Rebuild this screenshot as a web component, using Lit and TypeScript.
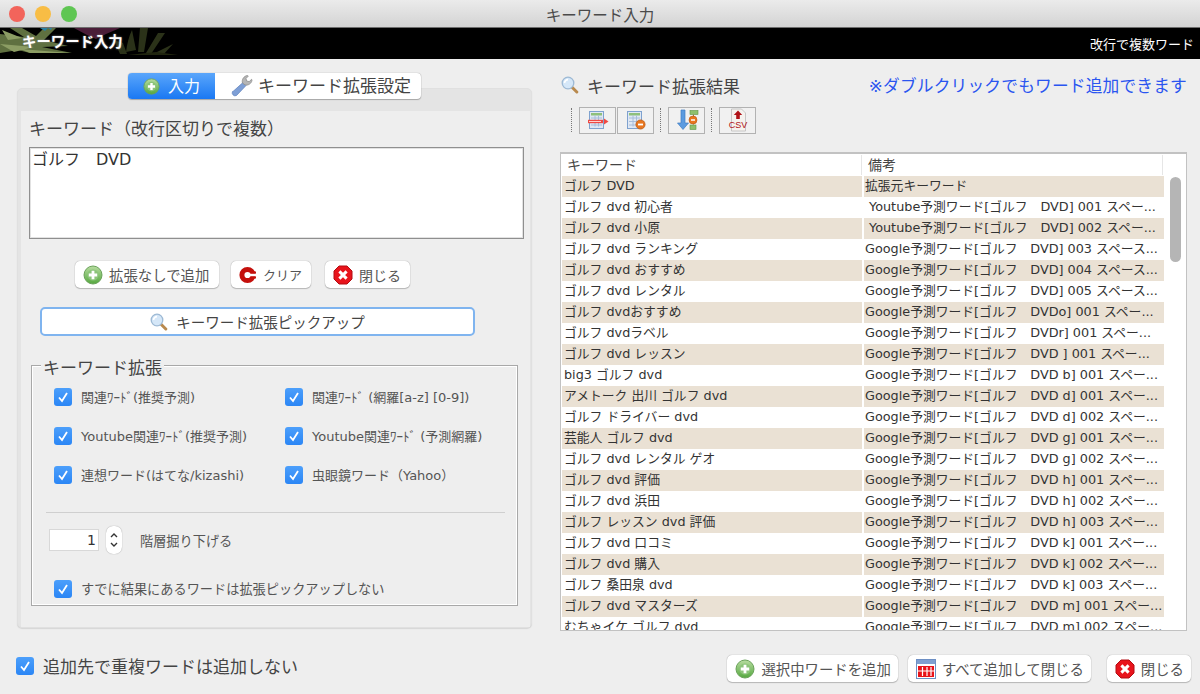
import { LitElement, html, css, svg } from 'lit';
import { customElement } from 'lit/decorators.js';

// icons, all drawn on a small box and scaled by the width/height given
const plusIcon = (s = 20) => html`<svg width=${s} height=${s} viewBox="0 0 20 20">
  <defs><linearGradient id="pg" x1="0" y1="0" x2="0" y2="1"><stop offset="0" stop-color="#b7dca0"/><stop offset="1" stop-color="#55a83f"/></linearGradient></defs>
  <circle cx="10" cy="10" r="9" fill="url(#pg)" stroke="#6aa25a" stroke-width="1"/>
  <circle cx="10" cy="10" r="5.6" fill="#8cc47a"/>
  <path d="M10 5.8v8.4M5.8 10h8.4" stroke="#fff" stroke-width="2.8"/>
</svg>`;

const closeIcon = (s = 20) => html`<svg width=${s} height=${s} viewBox="0 0 20 20">
  <path d="M6 1h8l5 5v8l-5 5H6l-5-5V6z" fill="#e8141c" stroke="#b30d12"/>
  <path d="M6.4 6.4l7.2 7.2M13.6 6.4l-7.2 7.2" stroke="#fff" stroke-width="3"/>
</svg>`;

const clearIcon = () => html`<svg width="18" height="18" viewBox="0 0 18 18">
  <circle cx="8.5" cy="9" r="5.6" fill="none" stroke="#c4100c" stroke-width="5"/>
  <path d="M11 7.600h7v2.800h-7z" fill="#fff"/>
  <path d="M11.500 5.600h5.500v2h-5.500zM11.500 10.400h5.500v2h-5.500z" fill="#c4100c"/>
</svg>`;

const lensIcon = (s = 18) => html`<svg width=${s} height=${s} viewBox="0 0 18 18">
  <path d="M10.8 11l5 5" stroke="#b98a4e" stroke-width="3" stroke-linecap="round"/>
  <circle cx="7" cy="7" r="5.8" fill="#d5e7f8" stroke="#9db9d4" stroke-width="1.3"/>
  <path d="M3.6 7a3.4 3.4 0 0 1 3.4-3.4" fill="none" stroke="#fff" stroke-width="1.6"/>
</svg>`;

const wrenchIcon = () => html`<svg width="24" height="24" viewBox="0 0 24 24">
  <path d="M3 17.5L13 8.5l3 3-9.5 10a3 3 0 0 1-4-4z" fill="#7e9fd6" stroke="#6486bf" stroke-width=".8"/>
  <path d="M12.5 9c-1-3 1-7 5-7.5l.8.5-2.3 2.600.7 2.400 2.500.6 2.400-2.300.4.800c-.4 3.500-4 5.700-7 4.800z" fill="#b5b5b5" stroke="#8e8e8e" stroke-width=".8"/>
</svg>`;

const allIcon = () => html`<svg width="20" height="20" viewBox="0 0 20 20">
  <rect x=".5" y=".5" width="19" height="19" fill="#fff" stroke="#6d8fc4"/>
  <rect x="1" y="1" width="18" height="4" fill="#7f9fd0"/>
  <rect x="2" y="7" width="16" height="11" fill="#e8131a"/>
  <path d="M6.500 8v9M11 8v9M15 8v9M2 12h16" stroke="#fff" stroke-width="1.200"/>
</svg>`;

// toolbar pictures: small table sheets with a marker on top
const sheet = svg`
  <rect x="3.500" y="1.500" width="14" height="17" fill="#dfe8f4" stroke="#7fa2cf"/>
  <rect x="5" y="3" width="11" height="2.500" fill="#8fc07c"/>
  <path d="M5 8h11M5 11.500h11M5 15h11M9 5.500v11M12.500 5.500v11" stroke="#a3b9d8" stroke-width=".9"/>`;

const toolIcon1 = () => html`<svg width="24" height="20" viewBox="0 0 24 20">${sheet}
  <path d="M2 11.500h15" stroke="#ef4a44" stroke-width="3.400"/>
  <path d="M3 11.500h12" stroke="#ffd1cd"/>
  <path d="M18 8.500l4.500 3-4.500 3z" fill="#ef4a44"/></svg>`;
const toolIcon2 = () => html`<svg width="24" height="20" viewBox="0 0 24 20">${sheet}
  <circle cx="16.500" cy="14.500" r="4.600" fill="#e8761f" stroke="#b8560f" stroke-width=".7"/>
  <path d="M14 14.500h5" stroke="#fff" stroke-width="1.800"/></svg>`;
const toolIcon3 = () => html`<svg width="26" height="22" viewBox="0 0 26 22">
  <path d="M7 1h4v13h3.500L9 20.500 3.500 14H7z" fill="#5b9be0" stroke="#3f7cc1" stroke-width=".7"/>
  <rect x="16" y="1.500" width="8" height="4" fill="#8ec06d" stroke="#5f9546" stroke-width=".6"/>
  <rect x="16" y="16" width="6" height="4.500" fill="#8ec06d" stroke="#5f9546" stroke-width=".6"/>
  <path d="M19.500 5.500v10" stroke="#9a7a45"/>
  <circle cx="19" cy="11" r="4" fill="#e8761f" stroke="#b8560f" stroke-width=".6"/>
  <path d="M17 11h4" stroke="#fff" stroke-width="1.500"/></svg>`;
const csvIcon = () => html`<svg width="24" height="24" viewBox="0 0 24 24">
  <path d="M5.500 1h10l4 4v18h-14z" fill="#f5f2ee" stroke="#bbb" stroke-width=".8"/>
  <path d="M12 2.500l4.200 4.500h-2.400v4h-3.600V7H7.800z" fill="#b01217"/>
  <text x="12" y="20" text-anchor="middle" font-size="9" fill="#b01217" font-family="Liberation Sans, sans-serif">CSV</text>
</svg>`;

const rows: [string, string][] = [
  ['ゴルフ DVD', '拡張元キーワード'],
  ['ゴルフ dvd 初心者', ' Youtube予測ワード[ゴルフ　DVD] 001 スペー...'],
  ['ゴルフ dvd 小原', ' Youtube予測ワード[ゴルフ　DVD] 002 スペー...'],
  ['ゴルフ dvd ランキング', 'Google予測ワード[ゴルフ　DVD] 003 スペース...'],
  ['ゴルフ dvd おすすめ', 'Google予測ワード[ゴルフ　DVD] 004 スペース...'],
  ['ゴルフ dvd レンタル', 'Google予測ワード[ゴルフ　DVD] 005 スペース...'],
  ['ゴルフ dvdおすすめ', 'Google予測ワード[ゴルフ　DVDo] 001 スペー...'],
  ['ゴルフ dvdラベル', 'Google予測ワード[ゴルフ　DVDr] 001 スペー...'],
  ['ゴルフ dvd レッスン', 'Google予測ワード[ゴルフ　DVD ] 001 スペー...'],
  ['big3 ゴルフ dvd', 'Google予測ワード[ゴルフ　DVD b] 001 スペー...'],
  ['アメトーク 出川 ゴルフ dvd', 'Google予測ワード[ゴルフ　DVD d] 001 スペー...'],
  ['ゴルフ ドライバー dvd', 'Google予測ワード[ゴルフ　DVD d] 002 スペー...'],
  ['芸能人 ゴルフ dvd', 'Google予測ワード[ゴルフ　DVD g] 001 スペー...'],
  ['ゴルフ dvd レンタル ゲオ', 'Google予測ワード[ゴルフ　DVD g] 002 スペー...'],
  ['ゴルフ dvd 評価', 'Google予測ワード[ゴルフ　DVD h] 001 スペー...'],
  ['ゴルフ dvd 浜田', 'Google予測ワード[ゴルフ　DVD h] 002 スペー...'],
  ['ゴルフ レッスン dvd 評価', 'Google予測ワード[ゴルフ　DVD h] 003 スペー...'],
  ['ゴルフ dvd 口コミ', 'Google予測ワード[ゴルフ　DVD k] 001 スペー...'],
  ['ゴルフ dvd 購入', 'Google予測ワード[ゴルフ　DVD k] 002 スペー...'],
  ['ゴルフ 桑田泉 dvd', 'Google予測ワード[ゴルフ　DVD k] 003 スペー...'],
  ['ゴルフ dvd マスターズ', 'Google予測ワード[ゴルフ　DVD m] 001 スペー...'],
  ['むちゃイケ ゴルフ dvd', 'Google予測ワード[ゴルフ　DVD m] 002 スペー...'],
];

@customElement('app-root')
export class AppRoot extends LitElement {
  static styles = css`
    :host {
      display: block;
      width: 1200px;
      height: 694px;
      overflow: hidden;
      background: #eeeeee;
      color: #333;
      font-family: 'DejaVu Sans', 'Noto Sans CJK JP', sans-serif;
      font-size: 13px;
    }
    * { box-sizing: border-box; }

    /* window chrome */
    .titlebar {
      height: 28px;
      display: flex;
      align-items: center;
      justify-content: center;
      position: relative;
      background: linear-gradient(#ebebeb, #d3d3d3);
      border-bottom: 1px solid #6d6d6d;
      font-size: 15.500px;
      color: #4a4a4a;
    }
    .lights {
      position: absolute;
      left: 9px;
      top: 6px;
      display: flex;
      gap: 10px;
    }
    .lights i { width: 16px; height: 16px; border-radius: 50%; display: block; }
    .banner {
      height: 31px;
      background: #000;
      position: relative;
      display: flex;
      align-items: center;
      justify-content: flex-end;
      padding-right: 6px;
      color: #fff;
      font-size: 13px;
    }
    .banner svg { position: absolute; left: 0; top: 0; filter: blur(.5px); }
    .banner b {
      position: absolute;
      left: 22px;
      top: 2px;
      font-size: 14.400px;
      font-weight: 700;
      text-shadow: 0 0 2px #999;
    }

    .main {
      display: grid;
      grid-template-columns: 515px 626px;
      column-gap: 29px;
      padding: 0 0 0 17px;
      height: 576px;
    }

    /* left side */
    .left { position: relative; padding-top: 29px; }
    .tabs {
      position: absolute;
      left: 111px;
      top: 14px;
      display: flex;
      height: 26px;
      border-radius: 4px;
      box-shadow: 0 0 1px #888, 0 1px 1px #aaa;
      background: #fff;
      z-index: 1;
    }
    .tab {
      display: flex;
      align-items: center;
      gap: 4px;
      padding: 0 10px 3px 15px;
      font-size: 17px;
      color: #444;
    }
    .tab svg { margin-top: 3px; }
    .tab.on {
      width: 87px;
      color: #fff;
      background: linear-gradient(#5aa6fb, #1a78f3);
      border-radius: 4px 0 0 4px;
      gap: 8px;
      font-size: 16px;
    }
    .panel {
      height: 540px;
      background: #e4e4e4;
      border: 1px solid #e0e0e0;
      border-radius: 5px;
      padding: 22px 1px 0 3px;
      box-shadow: 0 1px 1px #d5d5d5;
    }
    .panel-in {
      background: #eeeeee;
      height: 100%;
      padding: 5px 8px 0 8px;
      display: flex;
      flex-direction: column;
    }
    .kw-label { font-size: 17px; line-height: 26px; color: #444; margin-bottom: 5px; }
    .textarea {
      height: 92px;
      width: 495px;
      background: #fff;
      border: 1px solid #8f8f8f;
      box-shadow: inset 0 0 0 1px #e2e2e2;
      padding: 0 2px;
      font-size: 16px;
      line-height: 23px;
      color: #333;
      white-space: pre;
    }
    .btn-row { display: flex; margin: 22px 0 0 46px; }
    .btn {
      height: 27px;
      display: flex;
      align-items: center;
      gap: 6px;
      padding: 0 8px;
      background: #fff;
      border-radius: 5px;
      box-shadow: 0 0 1px #8a8a8a, 0 1px 1px #bbb;
      color: #555;
      font-size: 14.400px;
      white-space: nowrap;
    }
    .btn-row .add { width: 144px; }
    .btn-row .clear { width: 80px; margin-left: 12px; font-size: 13px; }
    .btn-row .close { width: 85px; margin-left: 14px; font-size: 14px; }
    .pick {
      margin: 19px 0 0 11px;
      width: 435px;
      height: 29px;
      display: flex;
      align-items: center;
      justify-content: center;
      gap: 8px;
      background: #fff;
      border: 2px solid #7fb4ef;
      border-radius: 5px;
      font-size: 14.500px;
      color: #444;
    }
    .fieldset {
      margin: 29px 0 0 2px;
      width: 487px;
      height: 241px;
      border: 1px solid #a8a8a8;
      box-shadow: 0 0 0 1px #fff inset;
      position: relative;
      padding: 11px 12px 0 13px;
    }
    .legend {
      position: absolute;
      left: 9px;
      top: -8px;
      padding: 0 2px;
      background: #eeeeee;
      font-size: 17px;
      line-height: 20px;
      color: #444;
    }
    .checks {
      display: grid;
      grid-template-columns: 231px 1fr;
      grid-auto-rows: 39px;
      height: 135px;
      padding-left: 9px;
    }
    .check {
      display: flex;
      align-items: center;
      gap: 9px;
      font-size: 13px;
      color: #555;
      white-space: nowrap;
    }
    .box {
      width: 18px;
      height: 18px;
      border-radius: 3px;
      background: linear-gradient(#4c9ffb, #2b86f5);
      display: flex;
      align-items: center;
      justify-content: center;
      flex: none;
    }
    .sep { height: 1px; background: #cfcfcf; margin: 0 0 0 1px; }
    .depth {
      display: flex;
      align-items: center;
      margin: 13px 0 0 4px;
      font-size: 13.200px;
      color: #555;
    }
    .num {
      width: 50px;
      height: 22px;
      background: #fff;
      border: 1px solid #d8d8d8;
      text-align: right;
      padding-right: 2px;
      font-size: 14px;
      line-height: 20px;
      color: #333;
    }
    .stepper {
      width: 16px;
      height: 28px;
      margin: 0 18px 0 7px;
      background: #fff;
      border-radius: 7px;
      box-shadow: 0 0 1px #888;
      display: flex;
      align-items: center;
      justify-content: center;
    }
    .last { padding-left: 9px; margin-top: 25px; font-size: 13.200px; }

    .bottom-check { margin-top: 25px; font-size: 17px; color: #444; gap: 9px; position: relative; left: -1px; }

    /* right side */
    .right { padding-top: 14px; display: flex; flex-direction: column; }
    .head { display: flex; align-items: center; height: 24px; justify-content: space-between; }
    .head-t { display: flex; align-items: center; gap: 8px; font-size: 17px; color: #444; }
    .hint { color: #2a55f0; font-size: 16.700px; letter-spacing: .2px; }
    .tools { display: flex; align-items: center; height: 28px; margin: 9px 0 0 4px; }
    .grip { width: 0; height: 24px; border-left: 1px dotted #777; margin: 0 7px 0 6px; }
    .tool {
      width: 37px;
      height: 27px;
      border: 1px solid #b2b2b2;
      background: #f1f1f1;
      display: flex;
      align-items: center;
      justify-content: center;
    }
    .tool + .tool { margin-left: 1px; }
    .table {
      margin: 18px 0 0 -1px;
      width: 627px;
      height: 479px;
      background: #fff;
      border: 1px solid #c2c2c2;
      border-width: 2px 1px 1px 1px;
      overflow: hidden;
      position: relative;
    }
    .thead, .row { display: grid; }
    .thead { grid-template-columns: 301px 301px; height: 22px; font-size: 14px; color: #444; line-height: 20px; }
    .thead div { padding-left: 6px; border-right: 1px solid #e6e6e6; margin: 1px 0; }
    .row { grid-template-columns: 300px 302px; height: 21px; line-height: 20px; font-size: 12.800px; color: #333; white-space: pre; margin-left: 1px; }
    .row div { overflow: hidden; padding-left: 1px; }
    .row div:first-child { padding-left: 2px; }
    .row div + div { margin-left: 2px; }
    .row.alt div { background: #eae1d4; }
    .scroll {
      position: absolute;
      right: 5px;
      top: 23px;
      width: 11px;
      height: 85px;
      border-radius: 6px;
      background: #b5b5b5;
    }

    .footer { display: flex; justify-content: flex-end; gap: 10px; margin: 24px -4px 0 0; }
    .footer .btn { gap: 6px; padding: 0 7px 0 8px; }
    .footer .btn:last-child { margin-left: 6px; }
  `;

  private check(label: string, extra = '') {
    return html`<div class="check ${extra}">
      <span class="box"><svg width="12" height="12" viewBox="0 0 12 12"><path d="M2 6.500l3 3.500 5-8" fill="none" stroke="#fff" stroke-width="1.800"/></svg></span>
      ${label}
    </div>`;
  }

  render() {
    return html`
      <div class="titlebar">
        <div class="lights">
          <i style="background:#f2645b"></i><i style="background:#f8bd45"></i><i style="background:#5fc653"></i>
        </div>
        キーワード入力
      </div>
      <div class="banner">
        <svg width="190" height="31" viewBox="0 0 190 31">
          <path d="M0 6l24 3L10 0h12l14 8 8-8h12L44 12l24 6-26 1 30 6H30l-12-3-18 3z" fill="#5f7040"/>
          <path d="M2 2l20 8-14 2zM0 16l34 3-20 5zM20 21l50 4-40 0z" fill="#8c9d64"/>
          <path d="M40 0h8l-3 3zM48 0h4l-1 2z" fill="#2b7fa3"/>
          <path d="M74 0h46l-14 6-10 5-9-4z" fill="#4a1d38"/>
          <path d="M126 24c1-8 3-16 6-22l4 20zM138 24l2-24h8l-4 24zM146 25l12-20h7l-14 21zM153 26l20-10-10 11zM120 26l-6-14 9 3 4 11z" fill="#2b3219"/>
          <path d="M128 27h50l-22-3z" fill="#20250f"/>
        </svg>
        <b>キーワード入力</b>
        改行で複数ワード
      </div>
      <div class="main">
        <div class="left">
          <div class="tabs">
            <div class="tab on">${plusIcon(17)}入力</div>
            <div class="tab">${wrenchIcon()}キーワード拡張設定</div>
          </div>
          <div class="panel">
            <div class="panel-in">
              <div class="kw-label">キーワード（改行区切りで複数）</div>
              <div class="textarea">ゴルフ　DVD</div>
              <div class="btn-row">
                <div class="btn add">${plusIcon()}拡張なしで追加</div>
                <div class="btn clear">${clearIcon()}クリア</div>
                <div class="btn close">${closeIcon()}閉じる</div>
              </div>
              <div class="pick">${lensIcon()}キーワード拡張ピックアップ</div>
              <div class="fieldset">
                <div class="legend">キーワード拡張</div>
                <div class="checks">
                  ${this.check('関連ﾜｰﾄﾞ(推奨予測)')}
                  ${this.check('関連ﾜｰﾄﾞ (網羅[a-z] [0-9])')}
                  ${this.check('Youtube関連ﾜｰﾄﾞ(推奨予測)')}
                  ${this.check('Youtube関連ﾜｰﾄﾞ (予測網羅)')}
                  ${this.check('連想ワード(はてな/kizashi)')}
                  ${this.check('虫眼鏡ワード（Yahoo）')}
                </div>
                <div class="sep"></div>
                <div class="depth">
                  <div class="num">1</div>
                  <div class="stepper">
                    <svg width="10" height="20" viewBox="0 0 10 20"><path d="M2 7l3-3 3 3M2 13l3 3 3-3" fill="none" stroke="#333" stroke-width="1.400"/></svg>
                  </div>
                  階層掘り下げる
                </div>
                ${this.check('すでに結果にあるワードは拡張ピックアップしない', 'last')}
              </div>
            </div>
          </div>
          ${this.check('追加先で重複ワードは追加しない', 'bottom-check')}
        </div>
        <div class="right">
          <div class="head">
            <div class="head-t">${lensIcon()}キーワード拡張結果</div>
            <div class="hint">※ダブルクリックでもワード追加できます</div>
          </div>
          <div class="tools">
            <span class="grip"></span>
            <div class="tool">${toolIcon1()}</div>
            <div class="tool">${toolIcon2()}</div>
            <span class="grip"></span>
            <div class="tool">${toolIcon3()}</div>
            <span class="grip"></span>
            <div class="tool">${csvIcon()}</div>
          </div>
          <div class="table">
            <div class="thead"><div>キーワード</div><div>備考</div></div>
            ${rows.map((r, i) => html`<div class="row ${i % 2 === 0 ? 'alt' : ''}"><div>${r[0]}</div><div>${r[1]}</div></div>`)}
            <div class="scroll"></div>
          </div>
          <div class="footer">
            <div class="btn">${plusIcon()}選択中ワードを追加</div>
            <div class="btn">${allIcon()}すべて追加して閉じる</div>
            <div class="btn">${closeIcon()}閉じる</div>
          </div>
        </div>
      </div>
    `;
  }
}
